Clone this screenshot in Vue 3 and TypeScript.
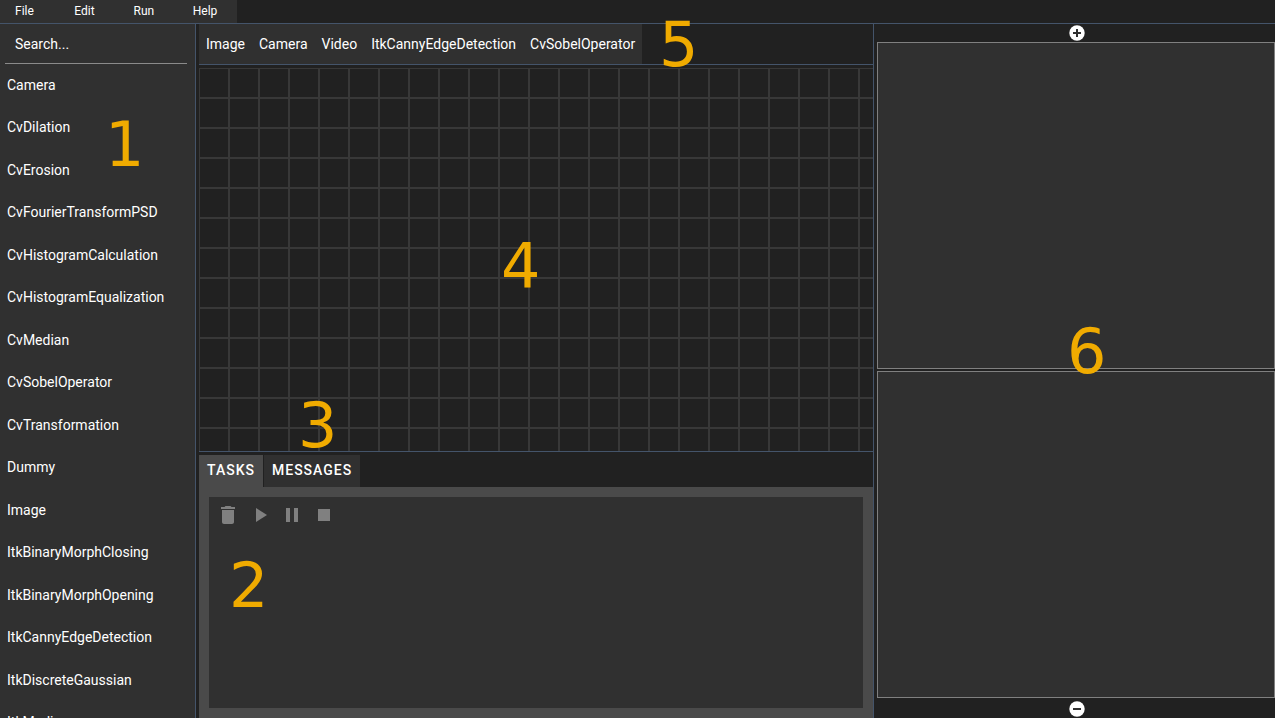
<script setup lang="ts">
import { ref } from 'vue'

interface Marker {
  label: string
  area: string
}

const menus: string[] = ['File', 'Edit', 'Run', 'Help']

const modules: string[] = [
  'Camera',
  'CvDilation',
  'CvErosion',
  'CvFourierTransformPSD',
  'CvHistogramCalculation',
  'CvHistogramEqualization',
  'CvMedian',
  'CvSobelOperator',
  'CvTransformation',
  'Dummy',
  'Image',
  'ItkBinaryMorphClosing',
  'ItkBinaryMorphOpening',
  'ItkCannyEdgeDetection',
  'ItkDiscreteGaussian',
  'ItkMedian',
]

const shortcuts: string[] = ['Image', 'Camera', 'Video', 'ItkCannyEdgeDetection', 'CvSobelOperator']

const tabs: string[] = ['TASKS', 'MESSAGES']
const activeTab = ref<string>('TASKS')
const search = ref<string>('')

const markers: Marker[] = [
  { label: '1', area: 'at-modules' },
  { label: '2', area: 'at-tasks' },
  { label: '3', area: 'at-tabs' },
  { label: '4', area: 'at-canvas' },
  { label: '5', area: 'at-shortcuts' },
  { label: '6', area: 'at-views' },
]
</script>

<template>
  <div class="app">
    <header class="topbar">
      <nav class="menu" aria-label="Main menu">
        <button v-for="menu in menus" :key="menu" type="button" class="menu-item">{{ menu }}</button>
      </nav>
    </header>

    <main class="workspace">
      <aside class="sidebar">
        <div class="search">
          <input v-model="search" class="search-input" type="text" placeholder="Search..." aria-label="Search modules" />
        </div>
        <ul class="modules">
          <li v-for="name in modules" :key="name" class="module">{{ name }}</li>
        </ul>
      </aside>

      <section class="center">
        <div class="shortcut-bar">
          <div class="shortcuts">
            <button v-for="name in shortcuts" :key="name" type="button" class="shortcut">{{ name }}</button>
          </div>
        </div>
        <div class="canvas"></div>
        <div class="console">
          <div class="tabs" role="tablist">
            <button
              v-for="tab in tabs"
              :key="tab"
              type="button"
              role="tab"
              class="tab"
              :class="{ active: tab === activeTab }"
              :aria-selected="tab === activeTab"
              @click="activeTab = tab"
            >{{ tab }}</button>
          </div>
          <div class="panel" role="tabpanel">
            <div class="panel-body">
              <button type="button" class="tool" aria-label="Delete">
                <svg viewBox="0 0 24 24" width="24" height="24"><path d="M6 19c0 1.100.9 2 2 2h8c1.100 0 2-.9 2-2V7H6v12zM19 4h-3.500l-1-1h-5l-1 1H5v2h14V4z" /></svg>
              </button>
              <button type="button" class="tool" aria-label="Run">
                <svg viewBox="0 0 24 24" width="24" height="24"><path d="M8 5v14l11-7z" /></svg>
              </button>
              <button type="button" class="tool" aria-label="Pause">
                <svg viewBox="0 0 24 24" width="24" height="24"><path d="M6 19h4V5H6v14zm8-14v14h4V5h-4z" /></svg>
              </button>
              <button type="button" class="tool" aria-label="Stop">
                <svg viewBox="0 0 24 24" width="24" height="24"><path d="M6 6h12v12H6z" /></svg>
              </button>
            </div>
          </div>
        </div>
      </section>

      <section class="views">
        <button type="button" class="view-action" aria-label="Add view">
          <svg viewBox="0 0 16 16" width="16" height="16"><circle cx="8" cy="8" r="7.700" fill="#fff" /><path d="M8 4v8M4 8h8" stroke="#303030" stroke-width="2" /></svg>
        </button>
        <div class="view"></div>
        <div class="view lower"></div>
        <button type="button" class="view-action remove" aria-label="Remove view">
          <svg viewBox="0 0 16 16" width="16" height="16"><circle cx="8" cy="8" r="7.700" fill="#fff" /><path d="M4 8h8" stroke="#303030" stroke-width="2" /></svg>
        </button>
      </section>
    </main>

    <span v-for="marker in markers" :key="marker.label" class="marker" :class="marker.area">{{ marker.label }}</span>
  </div>
</template>

<style>
body {
  margin: 0;
  background: #212121;
}
</style>

<style scoped>
.app {
  position: relative;
  display: grid;
  grid-template-rows: 24px minmax(0, 1fr);
  height: 100vh;
  overflow: hidden;
  background: #212121;
  color: #fff;
  font-family: Roboto, "Liberation Sans", sans-serif;
  font-size: 14px;
}

button,
input {
  margin: 0;
  padding: 0;
  border: 0;
  background: none;
  color: inherit;
  font: inherit;
}

.topbar {
  box-sizing: border-box;
  border-bottom: 1px solid #44546a;
}

.menu {
  display: grid;
  grid-template-columns: repeat(4, 1fr);
  width: 237px;
  height: 100%;
  background: #303030;
  font-size: 12px;
}

.menu-item {
  padding: 0 0 2px 15px;
  text-align: left;
}

.workspace {
  display: grid;
  grid-template-columns: 196px minmax(0, 1fr) 398px;
  gap: 3px;
  min-height: 0;
}

.sidebar {
  box-sizing: border-box;
  overflow: hidden;
  border-right: 1px solid #44546a;
  background: #303030;
}

.search {
  margin: 0 8px 0 5px;
  border-bottom: 1px solid #8a8a8a;
}

.search-input {
  display: block;
  box-sizing: border-box;
  width: 100%;
  height: 39px;
  padding-left: 10px;
  outline: 0;
}

.search-input::placeholder {
  color: #fff;
  opacity: 1;
}

.modules {
  margin: 0;
  padding: 0 7px;
  list-style: none;
}

.module {
  line-height: 43px;
}

.module:nth-child(even) {
  padding-bottom: 2px;
  line-height: 40px;
}

.center {
  display: grid;
  grid-template-rows: 41px minmax(0, 1fr) 263px;
  gap: 3px;
  min-width: 0;
  border-right: 1px solid #44546a;
}

.shortcut-bar {
  display: flex;
  border-bottom: 1px solid #44546a;
}

.shortcuts {
  display: flex;
  background: #303030;
}

.shortcut {
  padding: 0 7px;
}

.canvas {
  border-bottom: 1px solid #44546a;
  background-image:
    linear-gradient(90deg, #383838 1px, transparent 1px, transparent 29px, #383838 29px),
    linear-gradient(#383838 1px, transparent 1px, transparent 29px, #383838 29px);
  background-size: 30px 30px;
}

.console {
  display: grid;
  grid-template-rows: 32px minmax(0, 1fr);
}

.tabs {
  display: flex;
  gap: 1px;
}

.tab {
  padding: 0 8px 2px;
  background: #303030;
  font-weight: 500;
  letter-spacing: 1px;
}

.tab.active {
  background: #4a4a4a;
}

.panel {
  display: grid;
  padding: 10px;
  background: #4a4a4a;
}

.panel-body {
  display: flex;
  align-items: flex-start;
  gap: 8px;
  padding: 6px 7px;
  background: #303030;
}

.tool {
  width: 24px;
  height: 24px;
}

.tool svg {
  display: block;
  fill: #808080;
}

.views {
  display: grid;
  grid-template-rows: 18px minmax(0, 1fr) minmax(0, 1fr) 20px;
}

.view {
  margin-bottom: 1px;
  border: 1px solid #808080;
  background: #303030;
}

.view.lower {
  margin: 1px 0 0;
}

.view-action {
  display: flex;
  align-items: center;
  justify-content: center;
  padding-left: 2px;
}

.view-action.remove {
  padding-top: 2px;
}

.marker {
  position: absolute;
  color: #f0ab00;
  font-family: "DejaVu Sans", sans-serif;
  font-size: 62px;
  line-height: 72px;
  pointer-events: none;
}

.at-modules {
  left: 105px;
  top: 109px;
}

.at-tasks {
  left: 229px;
  top: 550px;
}

.at-tabs {
  left: 298px;
  top: 390px;
}

.at-canvas {
  left: 501px;
  top: 231px;
}

.at-shortcuts {
  left: 659px;
  top: 9px;
}

.at-views {
  left: 1067px;
  top: 316px;
}
</style>
